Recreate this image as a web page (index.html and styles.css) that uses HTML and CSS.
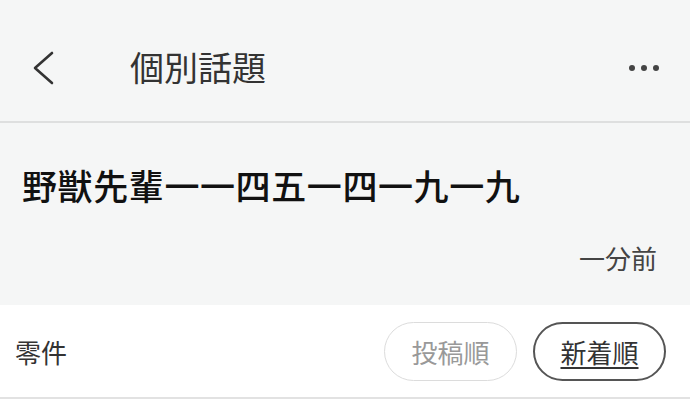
FILE: index.html
```html
<!DOCTYPE html>
<html lang="ja">
<head>
    <meta charset="UTF-8">
    <meta name="viewport" content="width=device-width, initial-scale=1.0">
    <title>個別話題</title>
    <link rel="stylesheet" href="styles.css">
</head>
<body>
    <div class="page">
        <div class="header">
            <button class="back-btn">
                <svg width="24" height="36" viewBox="0 0 24 36">
                    <polyline points="21,3 4,18 21,33" fill="none" stroke="#333" stroke-width="2.6" stroke-linecap="round" stroke-linejoin="round"/>
                </svg>
            </button>
            <h1 class="header-title">個別話題</h1>
            <div class="more-btn">
                <span class="dot"></span>
                <span class="dot"></span>
                <span class="dot"></span>
            </div>
        </div>

        <div class="topic">
            <h2 class="topic-title">野獣先輩一一四五一四一九一九</h2>
            <p class="topic-time">一分前</p>
        </div>

        <div class="filter-row">
            <span class="count">零件</span>
            <div class="sort-btns">
                <button class="sort-btn">投稿順</button>
                <button class="sort-btn active">新着順</button>
            </div>
        </div>
    </div>
</body>
</html>
```

FILE: styles.css
```css
* {
    margin: 0;
    padding: 0;
    box-sizing: border-box;
}

body {
    font-family: "Noto Sans CJK JP", "Noto Sans", sans-serif;
    background-color: #fff;
    color: #333;
}

.page {
    width: 690px;
}

.header {
    height: 123px;
    background-color: #f5f6f6;
    border-bottom: 2px solid #dedfdf;
    display: flex;
    align-items: center;
    padding: 14px 31px 0 31px;
}

.back-btn {
    border: none;
    background: transparent;
    width: 24px;
    height: 36px;
    display: flex;
}

.header-title {
    font-size: 34px;
    font-weight: 400;
    line-height: 1.2;
    color: #333;
    margin-left: 75px;
}

.more-btn {
    margin-left: auto;
    display: flex;
    gap: 6px;
}

.dot {
    width: 6px;
    height: 6px;
    border-radius: 50%;
    background-color: #444;
}

.topic {
    height: 182px;
    background-color: #f5f6f6;
    padding: 41px 33px 0 22px;
    display: flex;
    flex-direction: column;
}

.topic-title {
    font-size: 35px;
    font-weight: 500;
    line-height: 42px;
    letter-spacing: 0.6px;
    color: #111;
}

.topic-time {
    font-size: 26px;
    line-height: 32px;
    color: #444;
    text-align: right;
    margin-top: 36px;
}

.filter-row {
    height: 94px;
    border-bottom: 2px solid #e2e2e2;
    display: flex;
    align-items: center;
    padding: 0 24px 0 15px;
}

.count {
    font-size: 26px;
    color: #333;
}

.sort-btns {
    margin-left: auto;
    display: flex;
    gap: 16px;
}

.sort-btn {
    width: 133px;
    height: 59px;
    border-radius: 30px;
    border: 1.5px solid #dcdcdc;
    background: #fff;
    font-family: inherit;
    font-size: 26px;
    color: #999;
}

.sort-btn.active {
    border: 2px solid #555;
    color: #333;
    text-decoration: underline;
    text-underline-offset: 4px;
}
```
